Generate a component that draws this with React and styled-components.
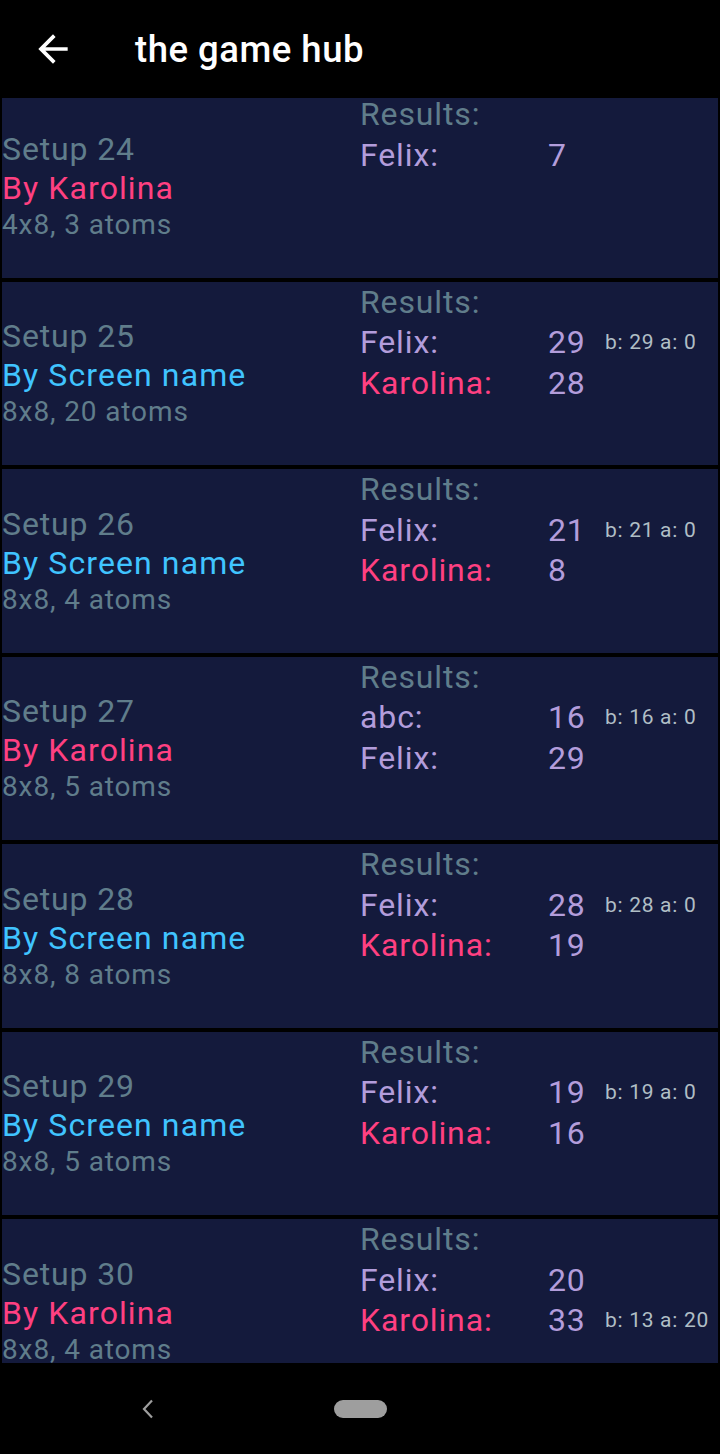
import React, { useLayoutEffect, useRef } from 'react';
import styled, { createGlobalStyle } from 'styled-components';

const GlobalStyle = createGlobalStyle`
  html, body {
    margin: 0;
    padding: 0;
    background: #000;
  }
  body {
    font-family: Roboto, 'Noto Sans', sans-serif;
  }
`;

const colors = {
  card: '#141a3c',
  muted: '#607d8b',
  pink: '#ff4081',
  blue: '#40c4ff',
  purple: '#b39ddb',
  small: '#b0bec5',
};

const Screen = styled.div`
  width: 720px;
  height: 1454px;
  display: flex;
  flex-direction: column;
  background: #000;
  overflow: hidden;
`;

const AppBar = styled.header`
  flex: 0 0 98px;
  display: flex;
  align-items: center;
  padding-left: 31px;
  gap: 60px;
  color: #fff;
`;

const Title = styled.h1`
  margin: 0;
  font-size: 36.5px;
  font-weight: 500;
  letter-spacing: 0.5px;
`;

const List = styled.main`
  flex: 1;
  min-height: 0;
  overflow: hidden;
  display: grid;
  align-content: start;
`;

const Card = styled.article`
  height: 183.5px;
  margin: 2px;
  display: grid;
  grid-template-columns: 1fr 1fr;
  background: ${colors.card};
  letter-spacing: 0.875px;
`;

const SetupInfo = styled.div`
  display: flex;
  flex-direction: column;
  justify-content: center;
  padding-top: 2px;
`;

const SetupName = styled.div`
  font-size: 32px;
  line-height: 37px;
  margin-bottom: 2px;
  color: ${colors.muted};
`;

const Author = styled.div`
  font-size: 32px;
  line-height: 37px;
  letter-spacing: 1.1px;
  color: ${(p) => p.$color};
`;

const Details = styled.div`
  font-size: 28px;
  line-height: 36px;
  color: ${colors.muted};
`;

const Results = styled.div`
  display: grid;
  grid-template-columns: 188px 57px 1fr;
  grid-auto-rows: 40.5px;
  align-items: center;
  align-content: start;
  font-size: 32px;
`;

const ResultsLabel = styled.div`
  grid-column: 1 / -1;
  color: ${colors.muted};
`;

const Player = styled.div`
  color: ${(p) => p.$color};
`;

const Score = styled.div`
  color: ${colors.purple};
`;

const Breakdown = styled.div`
  font-size: 21px;
  letter-spacing: 0.7px;
  color: ${colors.small};
  white-space: nowrap;
`;

const NavBar = styled.nav`
  flex: 0 0 91px;
  display: flex;
  align-items: center;
  padding-left: 141px;
  gap: 179px;
`;

const HomePill = styled.div`
  width: 53px;
  height: 18px;
  border-radius: 9px;
  background: #9e9e9e;
`;

const setups = [
  { id: 24, by: 'Karolina', size: '4x8, 3 atoms', results: [['Felix', 7]] },
  { id: 25, by: 'Screen name', size: '8x8, 20 atoms', results: [['Felix', 29, 'b: 29 a: 0'], ['Karolina', 28]] },
  { id: 26, by: 'Screen name', size: '8x8, 4 atoms', results: [['Felix', 21, 'b: 21 a: 0'], ['Karolina', 8]] },
  { id: 27, by: 'Karolina', size: '8x8, 5 atoms', results: [['abc', 16, 'b: 16 a: 0'], ['Felix', 29]] },
  { id: 28, by: 'Screen name', size: '8x8, 8 atoms', results: [['Felix', 28, 'b: 28 a: 0'], ['Karolina', 19]] },
  { id: 29, by: 'Screen name', size: '8x8, 5 atoms', results: [['Felix', 19, 'b: 19 a: 0'], ['Karolina', 16]] },
  { id: 30, by: 'Karolina', size: '8x8, 4 atoms', results: [['Felix', 20], ['Karolina', 33, 'b: 13 a: 20']] },
];

const nameColor = (name) =>
  name === 'Karolina' ? colors.pink : name === 'Screen name' ? colors.blue : colors.purple;

const BackArrow = () => (
  <svg width="44" height="44" viewBox="0 0 24 24" fill="#fff">
    <path d="M20 11H7.83l5.59-5.59L12 4l-8 8 8 8 1.41-1.41L7.83 13H20v-2z" />
  </svg>
);

const NavBack = () => (
  <svg width="14" height="20" viewBox="0 0 14 20" fill="none">
    <path d="M11 1.5 3 10l8 8.5" stroke="#9e9e9e" strokeWidth="2.2" />
  </svg>
);

const SetupCard = ({ id, by, size, results }) => (
  <Card>
    <SetupInfo>
      <SetupName>Setup {id}</SetupName>
      <Author $color={nameColor(by)}>By {by}</Author>
      <Details>{size}</Details>
    </SetupInfo>
    <Results>
      <ResultsLabel>Results:</ResultsLabel>
      {results.map(([name, score, extra]) => (
        <React.Fragment key={name}>
          <Player $color={nameColor(name)}>{name}:</Player>
          <Score>{score}</Score>
          <Breakdown>{extra}</Breakdown>
        </React.Fragment>
      ))}
    </Results>
  </Card>
);

export default function App() {
  const listRef = useRef(null);

  // the list is scrolled a few pixels down in the screenshot
  useLayoutEffect(() => {
    if (listRef.current) listRef.current.scrollTop = 6;
  }, []);

  return (
    <>
      <GlobalStyle />
      <Screen>
        <AppBar>
          <BackArrow />
          <Title>the game hub</Title>
        </AppBar>
        <List ref={listRef}>
          {setups.map((s) => (
            <SetupCard key={s.id} {...s} />
          ))}
        </List>
        <NavBar>
          <NavBack />
          <HomePill />
        </NavBar>
      </Screen>
    </>
  );
}
